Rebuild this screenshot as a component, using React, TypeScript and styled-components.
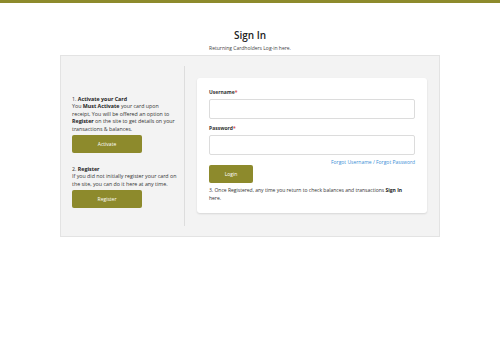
import styled, { createGlobalStyle } from 'styled-components';

const OLIVE = '#8d8a2c';

const GlobalStyle = createGlobalStyle`
  html, body {
    margin: 0;
    padding: 0;
    background: #ffffff;
    font-family: 'Open Sans', 'DejaVu Sans', sans-serif;
    color: #333333;
  }
  * { box-sizing: border-box; }
`;

const TopBar = styled.div`
  height: 3px;
  background: ${OLIVE};
`;

const Header = styled.div`
  text-align: center;
  padding-top: 26px;
`;

const Title = styled.h1`
  margin: 0;
  font-size: 10px;
  font-weight: 600;
  line-height: 12px;
  color: #222222;
`;

const Subtitle = styled.p`
  margin: 4px 0 0;
  font-size: 5px;
  line-height: 7px;
  color: #444444;
`;

const Panel = styled.div`
  width: 380px;
  height: 182px;
  margin: 3px auto 0;
  background: #f3f3f3;
  border: 1px solid #e3e3e3;
  display: flex;
  padding: 10px 12px 10px 0;
`;

const LeftCol = styled.div`
  width: 124px;
  border-right: 1px solid #dddddd;
  padding: 30px 0 0 11px;
`;

const Step = styled.div`
  font-size: 5.3px;
  line-height: 7.4px;
  color: #333333;
  width: 106px;
  margin-bottom: 2px;
  b {
    font-weight: 700;
    color: #222222;
  }
`;

const Button = styled.button<{ $width: number }>`
  display: block;
  width: ${({ $width }) => $width}px;
  height: 18px;
  border: none;
  border-radius: 2px;
  background: ${OLIVE};
  color: #ffffff;
  font-family: 'Open Sans', 'DejaVu Sans', sans-serif;
  font-size: 5px;
  padding: 0;
  cursor: pointer;
`;

const Spacer = styled.div<{ $h: number }>`
  height: ${({ $h }) => $h}px;
`;

const RightCol = styled.div`
  flex: 1;
  padding: 12px 0 0 12px;
`;

const Card = styled.div`
  background: #ffffff;
  border-radius: 3px;
  box-shadow: 0 1px 2px rgba(0, 0, 0, 0.12);
  padding: 11px 12px 7px;
  height: 135px;
`;

const Label = styled.label`
  display: block;
  font-size: 5px;
  font-weight: 700;
  line-height: 7px;
  color: #333333;
  span {
    color: #d9534f;
  }
`;

const Input = styled.input`
  display: block;
  width: 100%;
  height: 20px;
  margin: 3px 0 6px;
  border: 1px solid #dcdcdc;
  border-radius: 2px;
  background: #ffffff;
`;

const LinkRow = styled.div`
  text-align: right;
  font-size: 5px;
  line-height: 7px;
  color: #3b8fd6;
  margin-top: -2px;
  margin-bottom: -1px;
`;

const Note = styled.p`
  margin: 4px 0 0;
  font-size: 5px;
  line-height: 7.6px;
  color: #333333;
  b {
    font-weight: 700;
    color: #222222;
  }
`;

export default function App() {
  return (
    <>
      <GlobalStyle />
      <TopBar />
      <Header>
        <Title>Sign In</Title>
        <Subtitle>Returning Cardholders Log-in here.</Subtitle>
      </Header>
      <Panel>
        <LeftCol>
          <Step>
            1. <b>Activate your Card</b>
            <br />
            You <b>Must Activate</b> your card upon
            <br />
            receipt, You will be offered an option to{' '}
            <b>Register</b> on the site to get details on your transactions &amp; balances.
          </Step>
          <Button $width={70}>Activate</Button>
          <Spacer $h={13} />
          <Step>
            2. <b>Register</b>
            <br />
            If you did not initially register your card on the site, you can do it here at any time.
          </Step>
          <Button $width={70}>Register</Button>
        </LeftCol>
        <RightCol>
          <Card>
            <Label>
              Username<span>*</span>
            </Label>
            <Input type="text" />
            <Label>
              Password<span>*</span>
            </Label>
            <Input type="password" />
            <LinkRow>Forgot Username / Forgot Password</LinkRow>
            <Button $width={44}>Login</Button>
            <Note>
              3. Once Registered, any time you return to check balances and transactions <b>Sign In</b> here.
            </Note>
          </Card>
        </RightCol>
      </Panel>
    </>
  );
}
